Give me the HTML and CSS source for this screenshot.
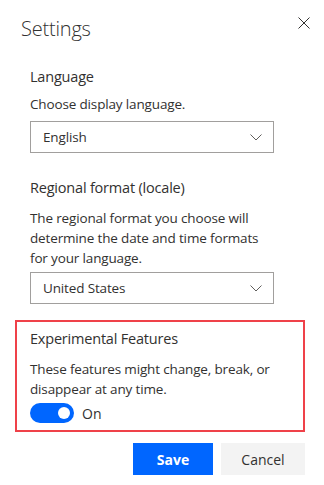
FILE: index.html
```html
<!DOCTYPE html>
<html>
<head>
<meta charset="utf-8">
<link rel="stylesheet" href="styles.css">
</head>
<body>
<div class="dialog">
  <div class="header">
    <h1 class="title">Settings</h1>
    <svg class="close" width="12" height="12" viewBox="0 0 12 12"><path d="M0.5 0.5L11.5 11.5M11.5 0.5L0.5 11.5" stroke="#323130" stroke-width="1" fill="none"/></svg>
  </div>
  <div class="content">
    <div class="section s-lang">
      <div class="label">Language</div>
      <div class="desc d-lang">Choose display language.</div>
      <div class="dropdown">
        <span>English</span>
        <svg class="chev" width="12" height="7" viewBox="0 0 12 7"><path d="M0.5 0.5L6 6L11.5 0.5" stroke="#605e5c" stroke-width="1" fill="none"/></svg>
      </div>
    </div>
    <div class="section s-region">
      <div class="label">Regional format (locale)</div>
      <div class="desc d-region">The regional format you choose will determine the date and time formats for your language.</div>
      <div class="dropdown dd-region">
        <span>United States</span>
        <svg class="chev" width="12" height="7" viewBox="0 0 12 7"><path d="M0.5 0.5L6 6L11.5 0.5" stroke="#605e5c" stroke-width="1" fill="none"/></svg>
      </div>
    </div>
    <div class="section exp">
      <div class="label">Experimental Features</div>
      <div class="desc d-exp">These features might change, break, or disappear at any time.</div>
      <div class="toggle-row">
        <span class="toggle"><span class="knob"></span></span>
        <span class="toggle-label">On</span>
      </div>
    </div>
    <div class="actions">
      <button class="btn primary">Save</button>
      <button class="btn secondary">Cancel</button>
    </div>
  </div>
</div>
</body>
</html>
```
FILE: styles.css
```css
html, body {
  margin: 0;
  padding: 0;
  background: #ffffff;
}
body {
  font-family: "Open Sans", "Noto Sans", sans-serif;
  color: #323130;
  font-size: 14px;
}
.dialog {
  width: 324px;
  height: 485px;
  box-sizing: border-box;
}
.header {
  display: flex;
  justify-content: space-between;
  align-items: flex-start;
  padding: 15px 14px 0 21px;
  height: 35px;
}
.title {
  margin: 0;
  font-size: 20px;
  font-weight: 300;
  line-height: 28px;
  letter-spacing: -0.2px;
}
.close {
  margin-top: 2px;
}
.content {
  padding-left: 30px;
  width: 244px;
  padding-top: 17px;
}
.label {
  font-size: 14.5px;
  line-height: 20px;
  letter-spacing: -0.2px;
}
.desc {
  font-size: 13.5px;
  line-height: 20px;
  letter-spacing: -0.15px;
}
.d-lang {
  margin-top: 7px;
}
.dropdown {
  margin-top: 7px;
  height: 32px;
  box-sizing: border-box;
  border: 1px solid #a19f9d;
  display: flex;
  align-items: center;
  justify-content: space-between;
  padding: 0 11px 0 12px;
  font-size: 13.5px;
  letter-spacing: -0.15px;
}
.chev {
  margin-top: 1px;
}
.s-region {
  margin-top: 25px;
}
.d-region {
  margin-top: 10px;
}
.dd-region {
  margin-top: 4px;
}
.exp {
  margin: 16px -31px 0 -15px;
  border: 2px solid #ef4149;
  padding: 7px 0 7px 13px;
}
.d-exp {
  margin-top: 10px;
}
.toggle-row {
  margin-top: 4px;
  display: flex;
  align-items: center;
  height: 20px;
}
.toggle {
  width: 44px;
  height: 20px;
  border-radius: 10px;
  background: #0066ff;
  position: relative;
  display: inline-block;
}
.knob {
  position: absolute;
  width: 12px;
  height: 12px;
  border-radius: 50%;
  background: #ffffff;
  right: 4px;
  top: 4px;
}
.toggle-label {
  margin-left: 8px;
  font-size: 14px;
}
.actions {
  display: flex;
  justify-content: flex-end;
  gap: 8px;
  margin-top: 11px;
  margin-right: -31px;
}
.btn {
  height: 32px;
  border: none;
  font-family: "Open Sans", "Noto Sans", sans-serif;
  font-size: 14px;
  padding: 0;
  cursor: pointer;
}
.primary {
  width: 80px;
  background: #0066ff;
  color: #ffffff;
  font-weight: 700;
}
.secondary {
  width: 84px;
  background: #f3f3f3;
  color: #323130;
}
```
